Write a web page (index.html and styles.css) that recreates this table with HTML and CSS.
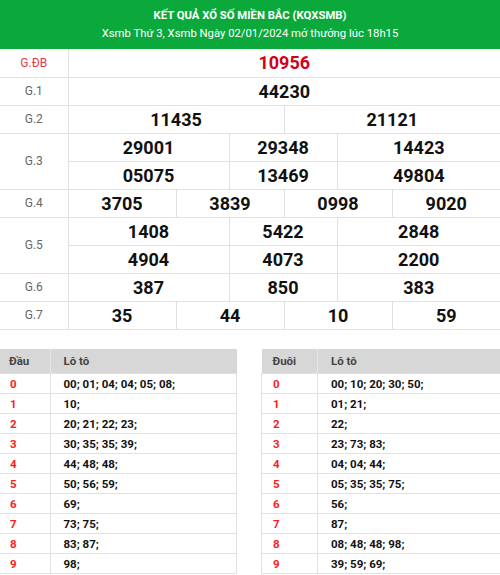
FILE: index.html
```html
<!DOCTYPE html>
<html lang="vi">
<head>
<meta charset="utf-8">
<title>KQXSMB</title>
<link rel="stylesheet" href="styles.css">
</head>
<body>
<div class="header">
  <div class="title">KẾT QUẢ XỔ SỐ MIỀN BẮC (KQXSMB)</div>
  <div class="sub">Xsmb Thứ 3, Xsmb Ngày 02/01/2024 mở thưởng lúc 18h15</div>
</div>
<table class="kq">
  <colgroup>
    <col class="c-label"><col class="c-a"><col class="c-b"><col class="c-c"><col class="c-b"><col class="c-c"><col class="c-a">
  </colgroup>
  <tr><td class="lbl db">G.ĐB</td><td colspan="6" class="num db-num">10956</td></tr>
  <tr><td class="lbl">G.1</td><td colspan="6" class="num">44230</td></tr>
  <tr><td class="lbl">G.2</td><td colspan="3" class="num">11435</td><td colspan="3" class="num">21121</td></tr>
  <tr><td class="lbl" rowspan="2">G.3</td><td colspan="2" class="num">29001</td><td colspan="2" class="num">29348</td><td colspan="2" class="num">14423</td></tr>
  <tr><td colspan="2" class="num">05075</td><td colspan="2" class="num">13469</td><td colspan="2" class="num">49804</td></tr>
  <tr><td class="lbl">G.4</td><td class="num">3705</td><td colspan="2" class="num">3839</td><td colspan="2" class="num">0998</td><td class="num">9020</td></tr>
  <tr><td class="lbl" rowspan="2">G.5</td><td colspan="2" class="num">1408</td><td colspan="2" class="num">5422</td><td colspan="2" class="num">2848</td></tr>
  <tr><td colspan="2" class="num">4904</td><td colspan="2" class="num">4073</td><td colspan="2" class="num">2200</td></tr>
  <tr><td class="lbl">G.6</td><td colspan="2" class="num">387</td><td colspan="2" class="num">850</td><td colspan="2" class="num">383</td></tr>
  <tr><td class="lbl">G.7</td><td class="num">35</td><td colspan="2" class="num">44</td><td colspan="2" class="num">10</td><td class="num">59</td></tr>
</table>
<div class="loto">
  <table class="lt lt-left">
    <tr><th class="k">Đầu</th><th>Lô tô</th></tr>
    <tr><td class="k">0</td><td>00; 01; 04; 04; 05; 08;</td></tr>
    <tr><td class="k">1</td><td>10;</td></tr>
    <tr><td class="k">2</td><td>20; 21; 22; 23;</td></tr>
    <tr><td class="k">3</td><td>30; 35; 35; 39;</td></tr>
    <tr><td class="k">4</td><td>44; 48; 48;</td></tr>
    <tr><td class="k">5</td><td>50; 56; 59;</td></tr>
    <tr><td class="k">6</td><td>69;</td></tr>
    <tr><td class="k">7</td><td>73; 75;</td></tr>
    <tr><td class="k">8</td><td>83; 87;</td></tr>
    <tr><td class="k">9</td><td>98;</td></tr>
  </table>
  <table class="lt lt-right">
    <tr><th class="k">Đuôi</th><th>Lô tô</th></tr>
    <tr><td class="k">0</td><td>00; 10; 20; 30; 50;</td></tr>
    <tr><td class="k">1</td><td>01; 21;</td></tr>
    <tr><td class="k">2</td><td>22;</td></tr>
    <tr><td class="k">3</td><td>23; 73; 83;</td></tr>
    <tr><td class="k">4</td><td>04; 04; 44;</td></tr>
    <tr><td class="k">5</td><td>05; 35; 35; 75;</td></tr>
    <tr><td class="k">6</td><td>56;</td></tr>
    <tr><td class="k">7</td><td>87;</td></tr>
    <tr><td class="k">8</td><td>08; 48; 48; 98;</td></tr>
    <tr><td class="k">9</td><td>39; 59; 69;</td></tr>
  </table>
</div>
</body>
</html>
```
FILE: styles.css
```css
html, body {
  margin: 0;
  padding: 0;
  background: #fff;
  font-family: Roboto, "Liberation Sans", sans-serif;
  width: 500px;
  overflow: hidden;
}
.header {
  background: #0ba93c;
  color: #fff;
  text-align: center;
  height: 49px;
  box-sizing: border-box;
  padding-top: 8px;
}
.title {
  font-weight: bold;
  font-size: 11.3px;
  line-height: 16px;
}
.sub {
  font-size: 11.3px;
  line-height: 18px;
  margin-top: 1px;
}
.kq {
  width: 500px;
  border-collapse: collapse;
  table-layout: fixed;
}
.c-label { width: 68px; }
.c-a { width: 108px; }
.c-b { width: 53px; }
.c-c { width: 55px; }
.kq td {
  border: 1px solid #e0e0e0;
  height: 28px;
  padding: 0;
  text-align: center;
  box-sizing: border-box;
}
.kq tr:first-child td { border-top: none; }
.kq td:first-child { border-left: none; }
.kq td:last-child { border-right: none; }
.lbl {
  font-size: 12px;
  color: #666;
}
.lbl.db { color: #e23b4e; }
.num {
  font-size: 18px;
  font-weight: bold;
  color: #111;
}
.num.db-num { color: #d0021b; }
.loto {
  display: flex;
  justify-content: space-between;
  margin-top: 19px;
}
.lt {
  border-collapse: collapse;
  table-layout: fixed;
  font-size: 11.5px;
}
.lt-left { width: 237px; }
.lt-right { width: 239px; }
.lt th, .lt td { box-sizing: border-box; }
.lt-left .k { width: 50px; }
.lt-right .k { width: 56px; }
.lt th {
  background: #d7d7d7;
  color: #444;
  font-weight: bold;
  text-align: left;
  height: 25px;
  padding: 0 0 0 13px;
  border-left: 1px solid #e6e6e6;
}
.lt th.k { padding-left: 9px; border-left: none; }
.lt-right th.k { padding-left: 11px; }
.lt td {
  height: 20px;
  padding: 0 0 0 13px;
  border: 1px solid #e0e0e0;
  font-weight: bold;
  color: #111;
}
.lt td.k {
  color: #ff1a1a;
  padding-left: 10px;
}
.lt-right td.k { padding-left: 11px; }
.lt-left td.k { border-left: none; }
.lt-right td:last-child { border-right: none; }
```
